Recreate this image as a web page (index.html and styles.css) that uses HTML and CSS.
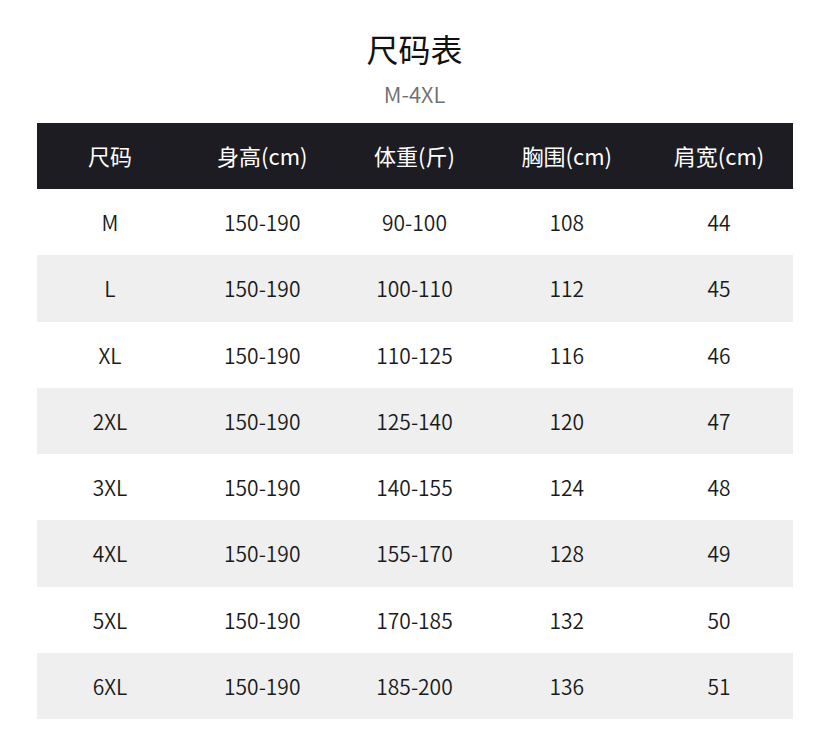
FILE: index.html
```html
<!DOCTYPE html>
<html lang="zh">
<head>
<meta charset="utf-8">
<title>尺码表</title>
<link rel="stylesheet" href="styles.css">
</head>
<body>
<div class="page">
  <h1 class="title">尺码表</h1>
  <div class="subtitle">M-4XL</div>
  <div class="table">
    <div class="row head"><div>尺码</div><div>身高(cm)</div><div>体重(斤)</div><div>胸围(cm)</div><div>肩宽(cm)</div></div>
    <div class="row"><div>M</div><div>150-190</div><div>90-100</div><div>108</div><div>44</div></div>
    <div class="row alt"><div>L</div><div>150-190</div><div>100-110</div><div>112</div><div>45</div></div>
    <div class="row"><div>XL</div><div>150-190</div><div>110-125</div><div>116</div><div>46</div></div>
    <div class="row alt"><div>2XL</div><div>150-190</div><div>125-140</div><div>120</div><div>47</div></div>
    <div class="row"><div>3XL</div><div>150-190</div><div>140-155</div><div>124</div><div>48</div></div>
    <div class="row alt"><div>4XL</div><div>150-190</div><div>155-170</div><div>128</div><div>49</div></div>
    <div class="row"><div>5XL</div><div>150-190</div><div>170-185</div><div>132</div><div>50</div></div>
    <div class="row alt"><div>6XL</div><div>150-190</div><div>185-200</div><div>136</div><div>51</div></div>
  </div>
</div>
</body>
</html>
```
FILE: styles.css
```css
html, body {
  margin: 0;
  padding: 0;
  background: #ffffff;
}
body {
  font-family: "Noto Sans CJK SC", "Noto Sans", sans-serif;
  color: #222;
  padding-left: 1px;
}
.page {
  width: 756px;
  margin: 0 auto;
  padding-top: 26px;
  display: flex;
  flex-direction: column;
  align-items: center;
}
.title {
  margin: 0;
  font-size: 32px;
  font-weight: 400;
  line-height: 44px;
  color: #111;
}
.subtitle {
  font-size: 22px;
  font-weight: 350;
  line-height: 30px;
  color: #6f6f6f;
  margin-top: 8px;
}
.table {
  width: 756px;
  margin-top: 15px;
  display: flex;
  flex-direction: column;
}
.row {
  display: grid;
  grid-template-columns: repeat(5, 152.25px);
  justify-content: center;
  height: 66.25px;
  align-items: center;
  font-size: 21px;
  font-weight: 350;
  color: #1a1a1a;
}
.row > div {
  text-align: center;
}
.row.head {
  height: 66px;
  background: #1c1c22;
  color: #fff;
  font-size: 22px;
  font-weight: 400;
}
.row.head > div {
  padding-bottom: 3px;
}
.row.alt {
  background: #efefef;
}
```
